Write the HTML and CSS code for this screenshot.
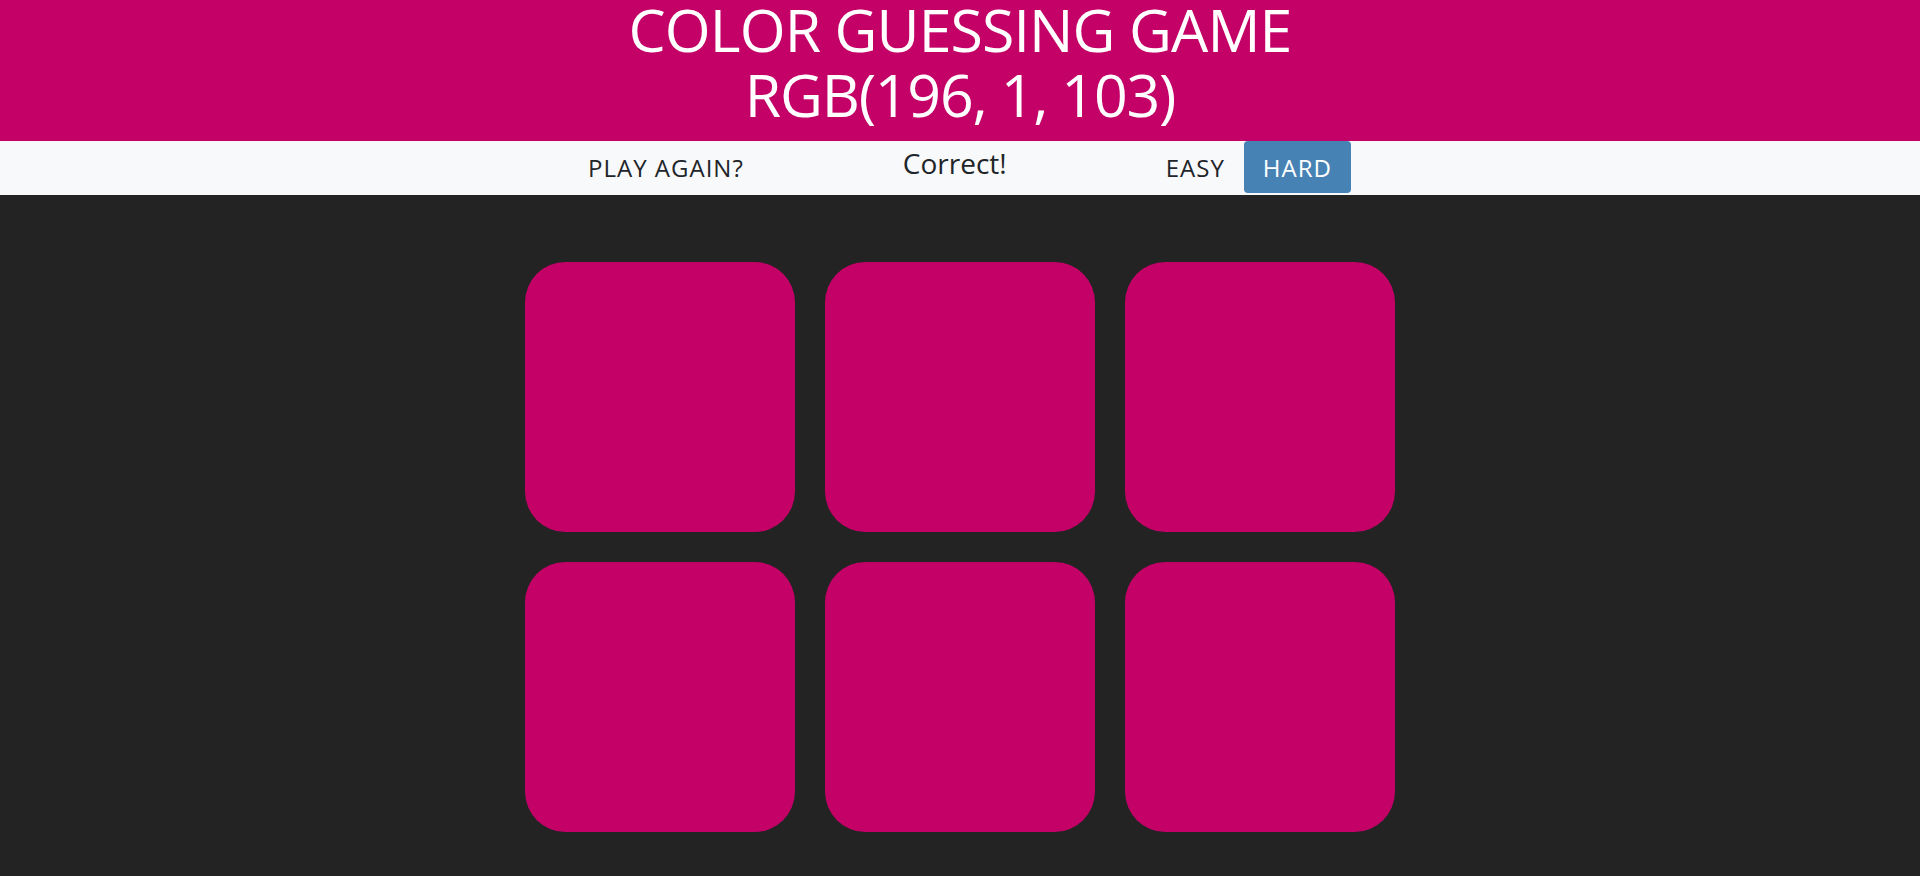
FILE: index.html
```html
<!DOCTYPE html>
<html lang="en">
<head>
<meta charset="utf-8">
<title>Color Guessing Game</title>
<link rel="stylesheet" href="styles.css">
</head>
<body>
<header class="title-bar">
  <h1 class="title">Color Guessing Game</h1>
  <span class="color-display">RGB(196, 1, 103)</span>
</header>
<nav class="stripe">
  <button class="btn">Play Again?</button>
  <span class="message">Correct!</span>
  <button class="btn">Easy</button>
  <button class="btn selected">Hard</button>
</nav>
<main class="board">
  <div class="square"></div>
  <div class="square"></div>
  <div class="square"></div>
  <div class="square"></div>
  <div class="square"></div>
  <div class="square"></div>
</main>
</body>
</html>
```
FILE: styles.css
```css
* { box-sizing: border-box; }

html, body {
  margin: 0;
  padding: 0;
}

body {
  background: #232323;
  font-family: "Open Sans", "Noto Sans", sans-serif;
  height: 876px;
  overflow: hidden;
}

.title-bar {
  background: #c40167;
  color: #ffffff;
  text-align: center;
  height: 141px;
  padding-bottom: 11px;
  text-transform: uppercase;
}

.title {
  margin: 0;
  font-weight: 400;
  font-size: 59px;
  line-height: 58px;
  letter-spacing: -0.9px;
}

.color-display {
  display: block;
  font-size: 59px;
  line-height: 72px;
  letter-spacing: -1.2px;
}

.stripe {
  background: #f8f9fa;
  height: 54px;
  display: flex;
  justify-content: center;
  align-items: flex-start;
}

.btn {
  background: none;
  border: none;
  border-radius: 4px;
  color: #212529;
  font-family: inherit;
  font-size: 24px;
  letter-spacing: 1px;
  text-transform: uppercase;
  height: 52px;
  line-height: 50px;
  padding: 2px 19px 0;
  margin: 0;
}

.btn.selected {
  background: #4682b4;
  color: #ffffff;
}

.message {
  width: 384px;
  text-align: center;
  font-size: 28px;
  line-height: 44px;
  color: #212529;
}

.board {
  width: 900px;
  margin: 52px auto 0;
  display: flex;
  flex-wrap: wrap;
}

.square {
  width: 270px;
  height: 270px;
  margin: 15px;
  border-radius: 15%;
  background: #c40167;
}
```
